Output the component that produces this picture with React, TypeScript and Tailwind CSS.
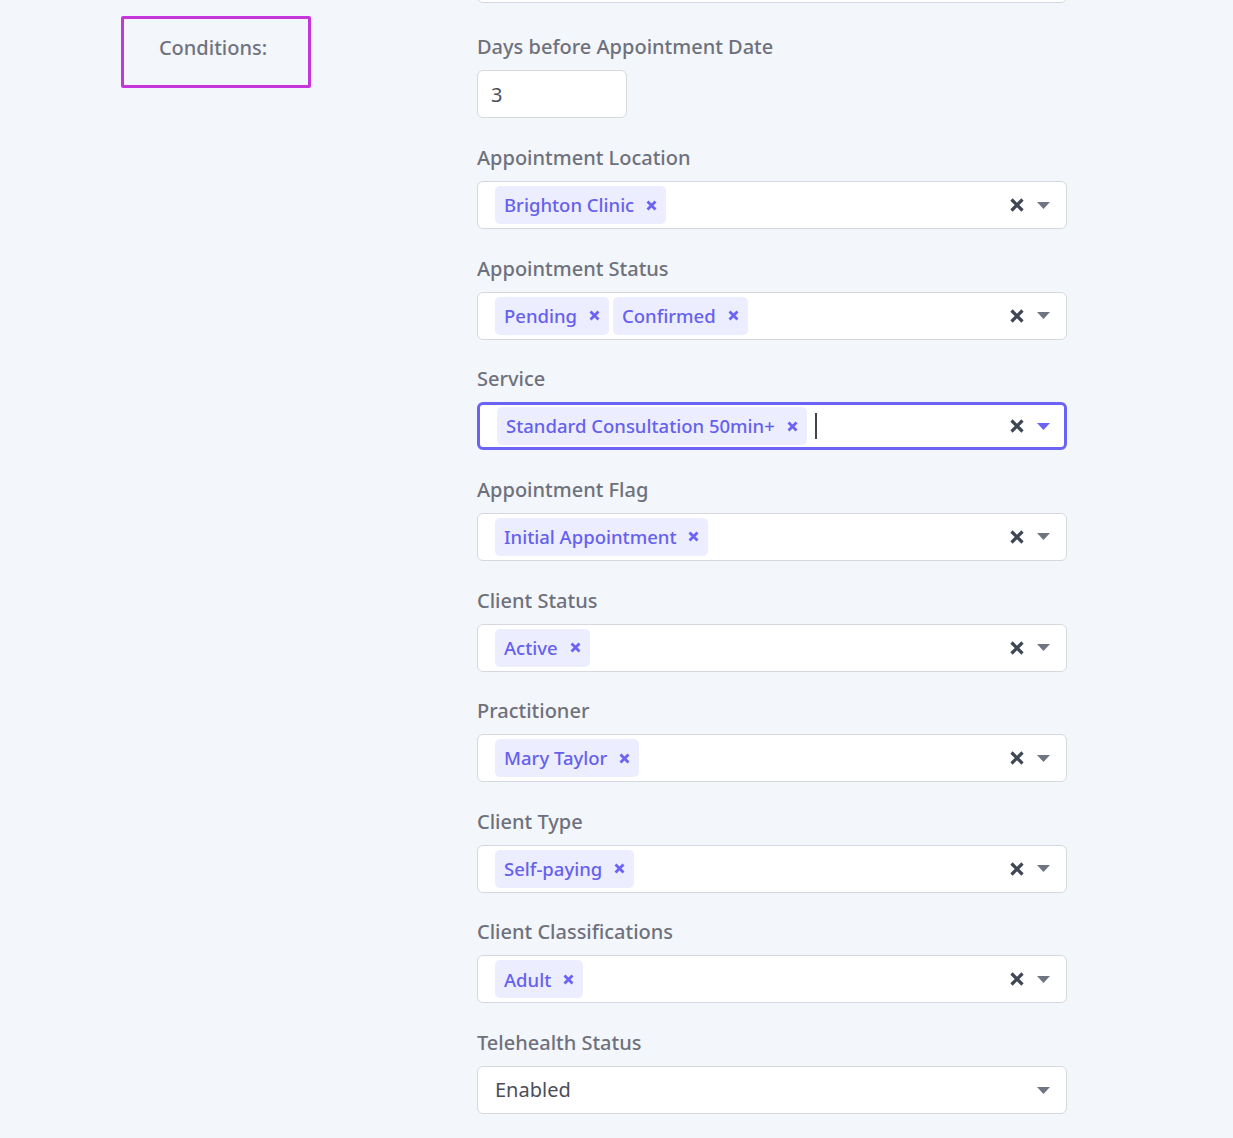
import React from "react";

type Field = {
  label: string;
  chips: string[];
  focused?: boolean;
};

const fields: Field[] = [
  { label: "Appointment Location", chips: ["Brighton Clinic"] },
  { label: "Appointment Status", chips: ["Pending", "Confirmed"] },
  { label: "Service", chips: ["Standard Consultation 50min+"], focused: true },
  { label: "Appointment Flag", chips: ["Initial Appointment"] },
  { label: "Client Status", chips: ["Active"] },
  { label: "Practitioner", chips: ["Mary Taylor"] },
  { label: "Client Type", chips: ["Self-paying"] },
  { label: "Client Classifications", chips: ["Adult"] },
];

const ClearIcon = () => (
  <svg width="16" height="16" viewBox="0 0 16 16" className="text-[#3f4654]">
    <path d="M2.5 2.5 L13.5 13.5 M13.5 2.5 L2.5 13.5" stroke="currentColor" strokeWidth="3.2" />
  </svg>
);

const Caret = ({ active }: { active?: boolean }) => (
  <svg width="13" height="7" viewBox="0 0 13 7" className={active ? "text-[#6c63f5]" : "text-[#6f7583]"}>
    <path d="M0 0 H13 L6.5 7 Z" fill="currentColor" />
  </svg>
);

const ChipX = () => (
  <svg width="11" height="11" viewBox="0 0 11 11" className="text-[#6c63f5]">
    <path d="M1.5 1.5 L9.5 9.5 M9.5 1.5 L1.5 9.5" stroke="currentColor" strokeWidth="2.8" />
  </svg>
);

const Label = ({ children }: { children: React.ReactNode }) => (
  <div className="h-[28px] leading-[28px] text-[20px] font-medium text-[#6e717c] mb-[9px]">{children}</div>
);

const MultiSelect = ({ field }: { field: Field }) => (
  <div className="mb-[25.625px]">
    <Label>{field.label}</Label>
    <div
      className={`h-[48px] bg-white rounded-[6px] flex items-center ${
        field.focused ? "border-[3px] border-[#6c63f5] pl-[17px] pr-[20px]" : "border border-[#d6d8de] pl-[17px] pr-[22px]"
      }`}
    >
      <div className="flex-1 flex items-center gap-[4px]">
        {field.chips.map((c) => (
          <span
            key={c}
            className="h-[38px] flex items-center gap-[12px] rounded-[5px] bg-[#ecedfe] pl-[9px] pr-[9px] text-[18.5px] font-medium text-[#6660ef]"
          >
            {c}
            <ChipX />
          </span>
        ))}
        {field.focused && <span className="ml-[4px] w-[2px] h-[26px] bg-[#444]" />}
      </div>
      <div className="flex items-center gap-[12px] -mr-[6px]">
        <ClearIcon />
        <Caret active={field.focused} />
      </div>
    </div>
  </div>
);

export default function App() {
  return (
    <div
      className="min-h-[1138px] bg-[#f3f6fb] flex overflow-hidden"
      style={{ fontFamily: '"Noto Sans", "Open Sans", sans-serif' }}
    >
      {/* left column */}
      <div className="w-[477px] shrink-0 pl-[121px] pt-[16px]">
        <div className="w-[190px] h-[72px] border-[3px] border-[#c536dc] rounded-[2px] flex justify-center pt-[15px] pr-[6px]">
          <span className="text-[20px] font-medium text-[#70737e] leading-[28px]">Conditions:</span>
        </div>
      </div>

      {/* right column */}
      <div className="w-[590px]">
        <div className="h-[48px] -mt-[45px] bg-white border border-[#d6d8de] rounded-[6px] mb-[30px]" />

        <div className="mb-[26px]">
          <Label>Days before Appointment Date</Label>
          <div className="w-[150px] h-[48px] bg-white border border-[#d6d8de] rounded-[6px] flex items-center pl-[13px] pt-[2px] text-[20px] text-[#4a4d57]">
            3
          </div>
        </div>

        {fields.map((f) => (
          <MultiSelect key={f.label} field={f} />
        ))}

        <div>
          <Label>Telehealth Status</Label>
          <div className="h-[48px] bg-white border border-[#d6d8de] rounded-[6px] flex items-center pl-[17px] pr-[16px]">
            <span className="flex-1 text-[20px] text-[#4a4d57]">Enabled</span>
            <Caret />
          </div>
        </div>
      </div>
    </div>
  );
}
